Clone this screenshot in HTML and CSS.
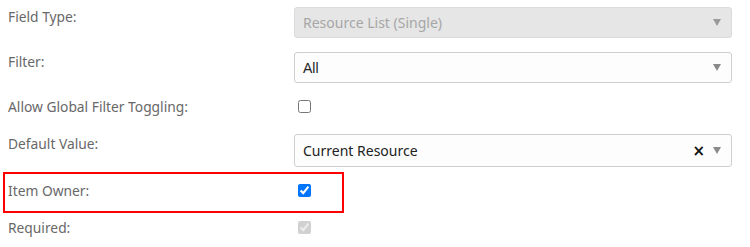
FILE: index.html
```html
<!DOCTYPE html>
<html lang="en">
<head>
	<meta charset="UTF-8"/>
	<title>Field Settings</title>
	<link rel="stylesheet" href="styles.css">
</head>
<body>

<div class="form">
	<div class="row select-row">
		<label class="label">Field Type:</label>
		<div class="select disabled">
			<span class="value">Resource List (Single)</span>
			<span class="arrow"></span>
		</div>
	</div>
	<div class="row select-row">
		<label class="label">Filter:</label>
		<div class="select">
			<span class="value arial">All</span>
			<span class="arrow"></span>
		</div>
	</div>
	<div class="row check-row">
		<label class="label">Allow Global Filter Toggling:</label>
		<input type="checkbox" class="check">
	</div>
	<div class="row select-row tall">
		<label class="label">Default Value:</label>
		<div class="select">
			<span class="value">Current Resource</span>
			<span class="clear">&times;</span>
			<span class="arrow"></span>
		</div>
	</div>
	<div class="row check-row highlighted">
		<label class="label">Item Owner:</label>
		<input type="checkbox" class="check" checked>
	</div>
	<div class="row check-row">
		<label class="label">Required:</label>
		<input type="checkbox" class="check" checked disabled>
	</div>
</div>

</body>
</html>
```

FILE: styles.css
```css
* {box-sizing: border-box;}
html, body {
	margin: 0;
	background: #fff;
}
body {
	font-family: "Noto Sans", "Open Sans", sans-serif;
	font-size: 13.8px;
	color: #222;
}
.form {
	display: flex;
	flex-direction: column;
	gap: 14px;
	padding: 7px 18px 0 8px;
}
.row {
	display: flex;
	align-items: flex-start;
	position: relative;
}
.label {
	width: 286px;
	flex: none;
	color: #686868;
	line-height: 20px;
}
.check-row {
	height: 23px;
}
.select {
	flex: 1;
	height: 31px;
	display: flex;
	align-items: center;
	padding: 0 10px 0 8px;
	border: 1px solid #cfcfcf;
	border-radius: 3px;
	background: #fdfdfd;
	font-size: 14px;
}
.tall .select {
	height: 33px;
}
.select.disabled {
	background: #e6e6e6;
	border-color: #dcdcdc;
	color: #a6a6a6;
}
.value {
	flex: 1;
}
.arial {
	font-family: "Liberation Sans", Arial, sans-serif;
}
.arrow {
	width: 0;
	height: 0;
	border-left: 4px solid transparent;
	border-right: 4px solid transparent;
	border-top: 7px solid #8a8a8a;
}
.disabled .arrow {
	border-top-color: #9a9a9a;
}
.clear {
	font-family: "DejaVu Sans", sans-serif;
	font-weight: bold;
	font-size: 15px;
	color: #111;
	margin-right: 8px;
}
.check {
	margin: 3px 0 0 4px;
	width: 13px;
	height: 13px;
}
.highlighted::before {
	content: "";
	position: absolute;
	left: -5px;
	top: -9px;
	width: 337px;
	height: 37px;
	border: 2px solid #f00;
}
```
